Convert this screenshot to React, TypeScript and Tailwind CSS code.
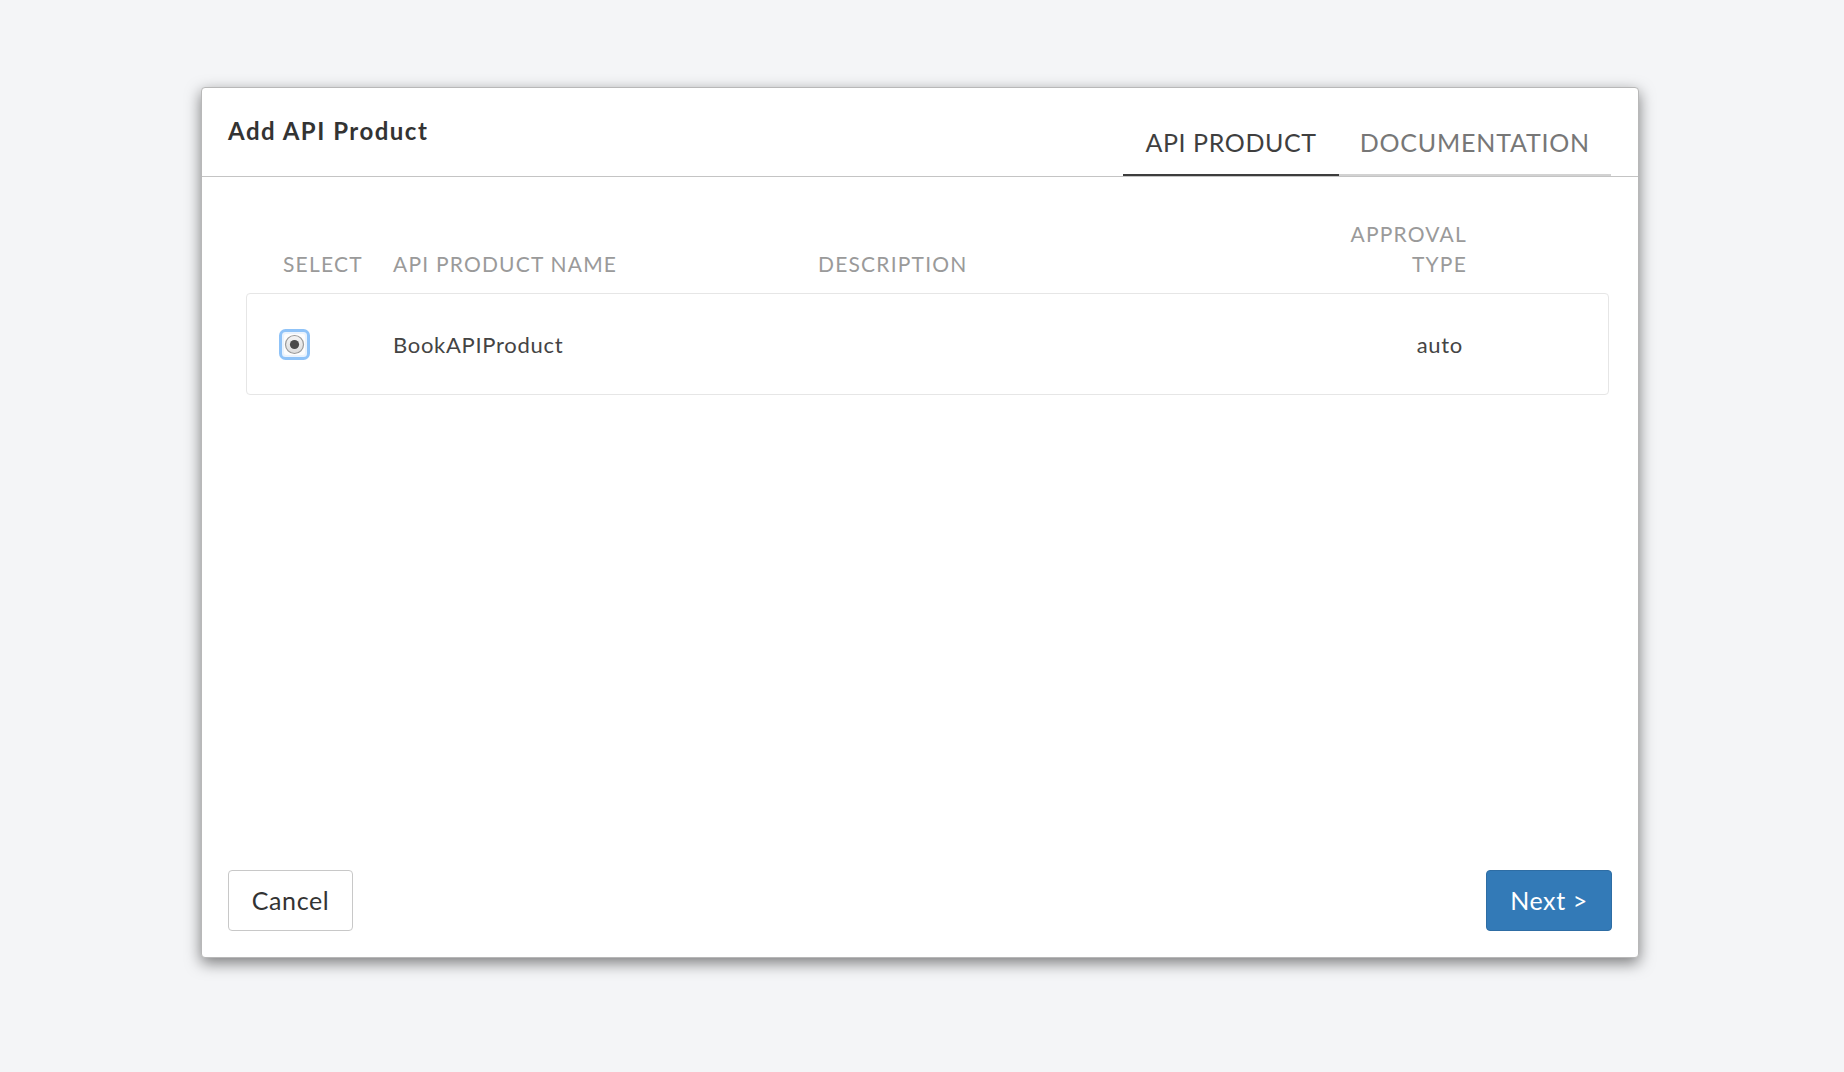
import React from "react";

const font = { fontFamily: "Lato, 'Open Sans', 'Liberation Sans', sans-serif" };

function RadioFocused() {
  return (
    <svg width="31" height="31" viewBox="0 0 31 31" aria-hidden="true">
      <defs>
        <linearGradient id="rg" x1="0" y1="0" x2="0" y2="1">
          <stop offset="0" stopColor="#f4f4f4" />
          <stop offset="1" stopColor="#dcdcdc" />
        </linearGradient>
      </defs>
      <rect x="1.5" y="1.5" width="28" height="28" rx="5" fill="#eaf3fd" stroke="#8fc3f8" strokeWidth="3" />
      <rect x="5" y="5" width="21" height="21" rx="2" fill="#fdfdfd" />
      <circle cx="15.5" cy="15.5" r="9" fill="url(#rg)" stroke="#9a9a9a" strokeWidth="1.2" />
      <circle cx="15.5" cy="15.5" r="4.6" fill="#4a4a4a" />
    </svg>
  );
}

export default function App() {
  return (
    <div className="min-h-screen bg-[#f4f5f7] pl-[201px] pt-[87px]" style={font}>
      <div className="flex h-[871px] w-[1438px] flex-col rounded-[4px] border border-[#b8b8b8] bg-white shadow-[0_5px_15px_rgba(0,0,0,0.5)]">
        {/* ── Header with tabs ── */}
        <div className="flex h-[89px] border-b border-[#c4c4c4]">
          <h2 className="pl-[26px] pt-[31px] text-[24px] font-bold leading-none tracking-[1.5px] text-[#333]">
            Add API Product
          </h2>
          <div className="ml-auto mr-[27px] flex self-end">
            <div className="border-b-2 border-[#3d3d3d] px-[22px] pb-[19px] text-[25px] leading-none tracking-[0.6px] text-[#3f3f3f]">
              API PRODUCT
            </div>
            <div className="border-b-2 border-[#d2d2d2] px-[21px] pb-[19px] text-[25px] leading-none tracking-[0.8px] text-[#777]">
              DOCUMENTATION
            </div>
          </div>
        </div>

        {/* ── Product table ── */}
        <div className="pl-[44px] pr-[29px] pt-[41px]">
          <div className="grid grid-cols-[146px_425px_519px_130px] items-end border border-transparent pb-[13px] text-[21px] uppercase leading-[30px] tracking-[1.2px] text-[#9a9a9a]">
            <div className="pl-[36px]">Select</div>
            <div>API Product Name</div>
            <div>Description</div>
            <div className="text-right">Approval Type</div>
          </div>
          <div className="grid h-[102px] grid-cols-[146px_425px_519px_130px] items-center rounded-[4px] border border-[#e6e6e6] text-[22px] tracking-[0.7px] text-[#444]">
            <div className="flex pl-[32px]">
              <RadioFocused />
            </div>
            <div>BookAPIProduct</div>
            <div />
            <div className="pr-[4px] text-right">auto</div>
          </div>
        </div>

        {/* ── Footer actions ── */}
        <div className="mt-auto flex justify-between pb-[26px] pl-[26px] pr-[26px]">
          <button className="h-[61px] w-[125px] rounded-[4px] border border-[#c8c8c8] bg-white text-[25px] tracking-[0.6px] text-[#333]">
            Cancel
          </button>
          <button className="h-[61px] w-[126px] rounded-[4px] border border-[#2e6da4] bg-[#337ab7] text-[25px] tracking-[0.6px] text-white">
            Next &gt;
          </button>
        </div>
      </div>
    </div>
  );
}
